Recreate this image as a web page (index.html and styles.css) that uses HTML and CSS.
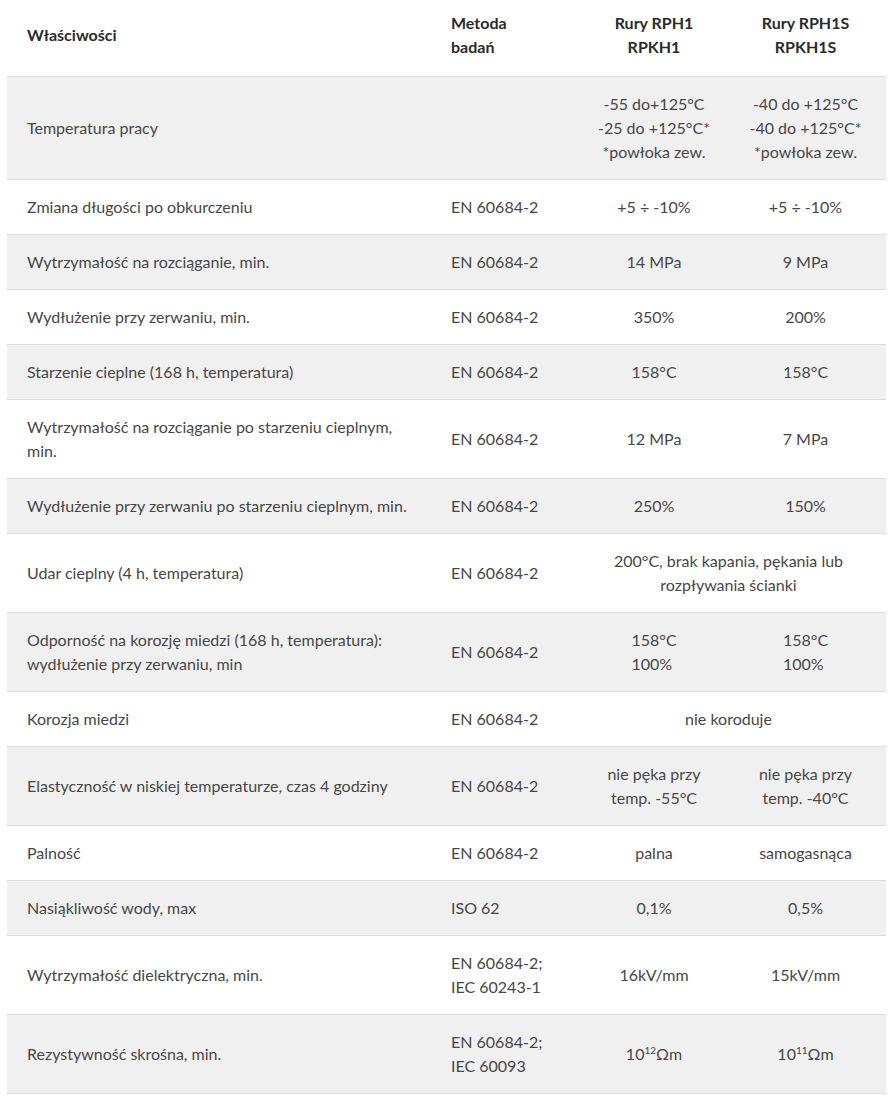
FILE: index.html
```html
<!DOCTYPE html>
<html lang="pl">
<head>
<meta charset="utf-8">
<link rel="stylesheet" href="styles.css">
</head>
<body>
<table class="spec">
  <colgroup>
    <col class="c1"><col class="c2"><col class="c3"><col class="c4">
  </colgroup>
  <thead>
    <tr>
      <th class="left">Właściwości</th>
      <th class="left">Metoda<br>badań</th>
      <th>Rury RPH1<br>RPKH1</th>
      <th>Rury RPH1S<br>RPKH1S</th>
    </tr>
  </thead>
  <tbody>
    <tr class="alt">
      <td class="left">Temperatura pracy</td>
      <td class="left"></td>
      <td class="val">-55 do+125°C<br>-25 do +125°C*<br>*powłoka zew.</td>
      <td class="val">-40 do +125°C<br>-40 do +125°C*<br>*powłoka zew.</td>
    </tr>
    <tr>
      <td class="left">Zmiana długości po obkurczeniu</td>
      <td class="left">EN 60684-2</td>
      <td class="val">+5 ÷ -10%</td>
      <td class="val">+5 ÷ -10%</td>
    </tr>
    <tr class="alt">
      <td class="left">Wytrzymałość na rozciąganie, min.</td>
      <td class="left">EN 60684-2</td>
      <td class="val">14 MPa</td>
      <td class="val">9 MPa</td>
    </tr>
    <tr>
      <td class="left">Wydłużenie przy zerwaniu, min.</td>
      <td class="left">EN 60684-2</td>
      <td class="val">350%</td>
      <td class="val">200%</td>
    </tr>
    <tr class="alt">
      <td class="left">Starzenie cieplne (168 h, temperatura)</td>
      <td class="left">EN 60684-2</td>
      <td class="val">158°C</td>
      <td class="val">158°C</td>
    </tr>
    <tr>
      <td class="left">Wytrzymałość na rozciąganie po starzeniu cieplnym, min.</td>
      <td class="left">EN 60684-2</td>
      <td class="val">12 MPa</td>
      <td class="val">7 MPa</td>
    </tr>
    <tr class="alt">
      <td class="left">Wydłużenie przy zerwaniu po starzeniu cieplnym, min.</td>
      <td class="left">EN 60684-2</td>
      <td class="val">250%</td>
      <td class="val">150%</td>
    </tr>
    <tr>
      <td class="left">Udar cieplny (4 h, temperatura)</td>
      <td class="left">EN 60684-2</td>
      <td colspan="2" class="val span">200°C, brak kapania, pękania lub<br>rozpływania ścianki</td>
    </tr>
    <tr class="alt">
      <td class="left">Odporność na korozję miedzi (168 h, temperatura):<br>wydłużenie przy zerwaniu, min</td>
      <td class="left">EN 60684-2</td>
      <td class="val"><span class="block">158°C<br>100%</span></td>
      <td class="val"><span class="block">158°C<br>100%</span></td>
    </tr>
    <tr>
      <td class="left">Korozja miedzi</td>
      <td class="left">EN 60684-2</td>
      <td colspan="2" class="val span">nie koroduje</td>
    </tr>
    <tr class="alt">
      <td class="left">Elastyczność w niskiej temperaturze, czas 4 godziny</td>
      <td class="left">EN 60684-2</td>
      <td class="val">nie pęka przy<br>temp. -55°C</td>
      <td class="val">nie pęka przy<br>temp. -40°C</td>
    </tr>
    <tr>
      <td class="left">Palność</td>
      <td class="left">EN 60684-2</td>
      <td class="val">palna</td>
      <td class="val">samogasnąca</td>
    </tr>
    <tr class="alt">
      <td class="left">Nasiąkliwość wody, max</td>
      <td class="left">ISO 62</td>
      <td class="val">0,1%</td>
      <td class="val">0,5%</td>
    </tr>
    <tr>
      <td class="left">Wytrzymałość dielektryczna, min.</td>
      <td class="left">EN 60684-2;<br>IEC 60243-1</td>
      <td class="val">16kV/mm</td>
      <td class="val">15kV/mm</td>
    </tr>
    <tr class="alt">
      <td class="left">Rezystywność skrośna, min.</td>
      <td class="left">EN 60684-2;<br>IEC 60093</td>
      <td class="val">10<sup>12</sup>Ωm</td>
      <td class="val">10<sup>11</sup>Ωm</td>
    </tr>
  </tbody>
</table>
</body>
</html>
```

FILE: styles.css
```css
html, body {
  margin: 0;
  padding: 0;
  background: #ffffff;
}

body {
  padding: 0 7px 0 7px;
  font-family: "Lato", "Noto Sans", sans-serif;
  font-size: 16px;
  line-height: 24px;
  color: #474747;
}

.spec {
  width: 879px;
  border-collapse: collapse;
  table-layout: fixed;
}

.c1 { width: 424px; }
.c2 { width: 152px; }
.c3 { width: 142px; }
.c4 { width: 161px; }

.spec th {
  font-weight: 700;
  color: #2b2b2b;
  text-align: center;
  vertical-align: middle;
  padding: 11px 20px 17px 20px;
  border-bottom: 1px solid #dcdcdc;
}

.spec td {
  text-align: center;
  vertical-align: middle;
  padding: 15px 20px 15px 20px;
  border-bottom: 1px solid #dcdcdc;
}

.spec .left {
  text-align: left;
}

.spec td.val {
  white-space: nowrap;
  padding-left: 10px;
  padding-right: 10px;
}

.spec tr.alt td {
  background: #f0f0f0;
}

.spec td.span {
  padding-left: 0;
  padding-right: 12px;
}

.block {
  display: inline-block;
  text-align: left;
}

sup {
  font-size: 10px;
  line-height: 0;
  vertical-align: 6px;
}
```
